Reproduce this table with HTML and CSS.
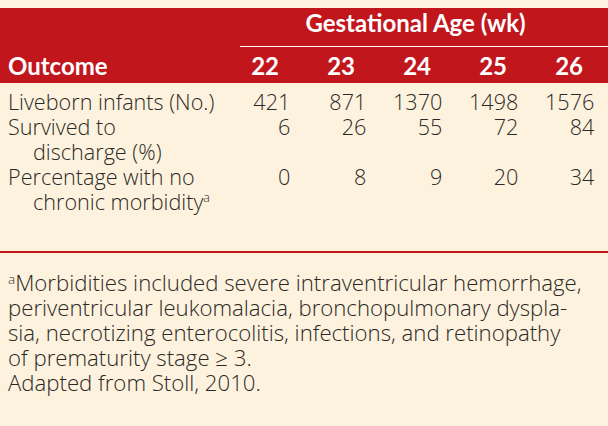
FILE: index.html
```html
<!DOCTYPE html>
<html>
<head>
<meta charset="utf-8">
<link rel="stylesheet" href="styles.css">
</head>
<body>
<div class="page">
  <div class="thead">
    <div class="group">Gestational Age (wk)</div>
    <div class="hcell hlabel">Outcome</div>
    <div class="hcell hnum">22</div>
    <div class="hcell hnum">23</div>
    <div class="hcell hnum">24</div>
    <div class="hcell hnum">25</div>
    <div class="hcell hnum">26</div>
  </div>
  <div class="tbody">
    <div class="label">Liveborn infants (No.)</div>
    <div class="num">421</div><div class="num">871</div><div class="num">1370</div><div class="num">1498</div><div class="num">1576</div>
    <div class="label">Survived to<br>discharge (%)</div>
    <div class="num">6</div><div class="num">26</div><div class="num">55</div><div class="num">72</div><div class="num">84</div>
    <div class="label">Percentage with no<br>chronic morbidity<sup class="sup">a</sup></div>
    <div class="num">0</div><div class="num">8</div><div class="num">9</div><div class="num">20</div><div class="num">34</div>
  </div>
  <div class="notes">
    <p class="note"><sup class="nsup">a</sup>Morbidities included severe intraventricular hemorrhage,<br>periventricular leukomalacia, bronchopulmonary dyspla-<br>sia, necrotizing enterocolitis, infections, and retinopathy<br>of prematurity stage ≥ 3.</p>
    <p class="note">Adapted from Stoll, 2010.</p>
  </div>
</div>
</body>
</html>
```

FILE: styles.css
```css
html, body {
  margin: 0;
  padding: 0;
  background: #fdf2dd;
}
.page {
  width: 608px;
  height: 426px;
  overflow: hidden;
  padding-top: 8px;
  box-sizing: border-box;
  background: #fdf2dd;
  font-family: "Open Sans", "Liberation Sans", sans-serif;
  color: #2b2927;
}
.thead {
  background: #c2161d;
  color: #ffffff;
  font-family: "Lato", "Liberation Sans", sans-serif;
  font-weight: 700;
  font-size: 24px;
  line-height: 30px;
  height: 75px;
  box-sizing: border-box;
  padding: 0 17px 0 8px;
  display: grid;
  grid-template-columns: 1fr repeat(5, 76px);
}
.group {
  grid-column: 2 / -1;
  margin-left: 29px;
  margin-right: -17px;
  padding-right: 17px;
  padding-bottom: 6px;
  text-align: center;
  border-bottom: 1px solid #ffffff;
}
.hcell {
  padding-top: 4px;
}
.hnum {
  text-align: right;
  padding-right: 8px;
}
.tbody {
  display: grid;
  grid-template-columns: 1fr repeat(5, 76px);
  padding: 6px 17px 37px 8px;
  font-size: 21.6px;
  font-weight: 350;
  line-height: 25px;
  border-bottom: 2px solid #c2161d;
}
.label {
  padding-left: 25px;
  text-indent: -25px;
  white-space: nowrap;
}
.num {
  text-align: right;
}
.sup {
  font-size: 12.5px;
  vertical-align: top;
  line-height: 14px;
  position: relative;
  top: 2px;
}
.notes {
  padding: 17px 8px 0 8px;
  font-size: 22.2px;
  font-weight: 350;
  line-height: 25px;
}
.note {
  margin: 0;
  white-space: nowrap;
}
.nsup {
  font-size: 13.5px;
  vertical-align: top;
  line-height: 14px;
  position: relative;
  top: 2px;
}
```
